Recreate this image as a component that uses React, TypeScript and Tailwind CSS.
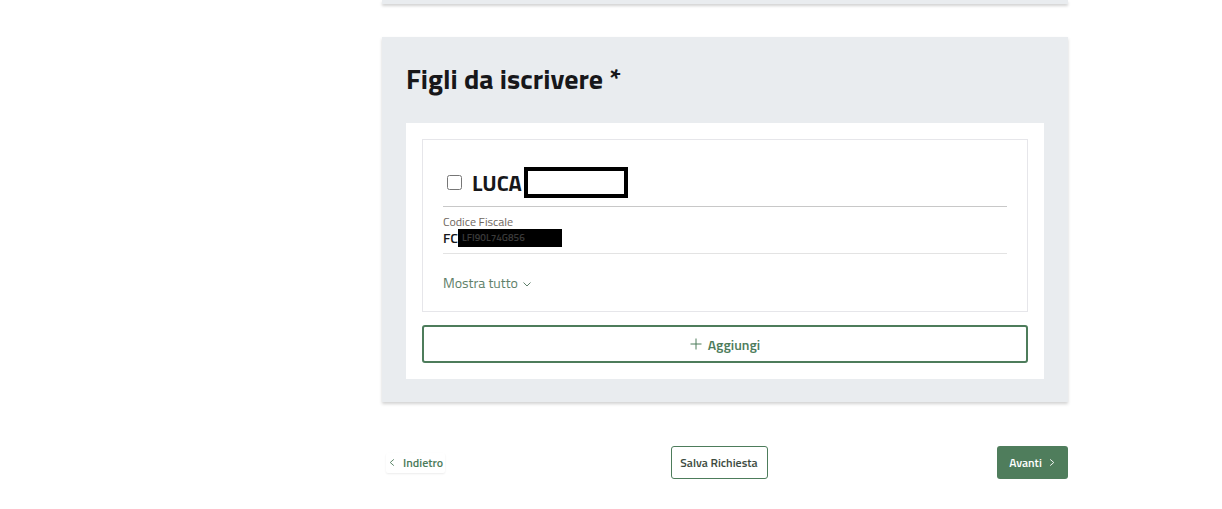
import React from "react";

const font = { fontFamily: '"Titillium Web", "Liberation Sans Narrow", "DejaVu Sans Condensed", "Roboto", sans-serif' };

const Chevron: React.FC<{ dir: "left" | "right" | "down"; className?: string }> = ({ dir, className }) => {
  const d = dir === "left" ? "M6.5 1.5 L2.5 5 L6.5 8.5" : dir === "right" ? "M3.5 1.5 L7.5 5 L3.5 8.5" : "M1.5 3.5 L5 7 L8.5 3.5";
  return (
    <svg viewBox="0 0 10 10" className={className} fill="none" stroke="currentColor" strokeWidth="1">
      <path d={d} />
    </svg>
  );
};

const ChildCard: React.FC = () => (
  <div className="border border-[#e6e6ea] px-5 pt-[27px] pb-[18px]">
    <div className="flex items-center gap-[10px] px-[4px] pb-[8px] border-b border-[#c8c8c8]">
      <input type="checkbox" className="w-[15px] h-[15px] accent-[#4d7c5b]" />
      <div className="flex items-center">
        <span className="text-[22px] font-bold text-[#17171a] leading-none">LUCA</span>
        <span className="inline-block w-[104px] h-[31px] border-[4px] border-black bg-white ml-[2px]" />
      </div>
    </div>
    <div className="pt-[8px] pb-[6px] border-b border-[#e3e3e3]">
      <div className="text-[12px] text-[#6e665e] leading-[13px]">Codice Fiscale</div>
      <div className="mt-[1px] flex items-center text-[14px] font-semibold text-[#17171a] leading-[18px]">
        <span>FC</span>
        <span className="inline-block bg-black text-[#3a3a3a] text-[10px] pl-[4px] h-[18px] leading-[18px] w-[104px]">
          LFI90L74G856
        </span>
      </div>
    </div>
    <div className="flex items-center gap-[4px] pt-[18px] text-[14px] text-[#5f7f6a]">
      Mostra tutto
      <Chevron dir="down" className="w-[10px] h-[10px] mt-[2px]" />
    </div>
  </div>
);

export default function App() {
  return (
    <div className="w-[1222px] h-[509px] bg-white overflow-hidden" style={font}>
      <div className="ml-[382px] w-[686px]">
        <div className="h-[4px] bg-[#e9ecef] shadow-[0_2px_3px_rgba(0,0,0,0.18)]" />
        <div className="mt-[33px] bg-[#e9ecef] shadow-[0_2px_3px_rgba(0,0,0,0.18)] px-[24px] pt-[25px] pb-[23px]">
          <h2 className="text-[28px] font-bold text-[#17171a] leading-[34px]">Figli da iscrivere *</h2>
          <div className="mt-[27px] bg-white p-[16px] flex flex-col gap-[13px]">
            <ChildCard />
            <button className="h-[38px] w-full border-2 border-[#4d7c5b] rounded-[3px] flex items-center justify-center gap-[6px] text-[14px] font-semibold text-[#4d7c5b]">
              <svg viewBox="0 0 12 12" className="w-[12px] h-[12px]" fill="none" stroke="currentColor" strokeWidth="1">
                <path d="M6 0.5 V11.5 M0.5 6 H11.5" />
              </svg>
              Aggiungi
            </button>
          </div>
        </div>
        <div className="mt-[44px] grid grid-cols-[1fr_auto_1fr] items-center">
          <div className="flex">
            <button className="ml-[4px] flex items-center gap-[6px] px-[2px] h-[20px] text-[12px] font-semibold text-[#4d7c5b] shadow-[0_1px_2px_rgba(0,0,0,0.08)] rounded-[2px]">
              <Chevron dir="left" className="w-[9px] h-[9px]" />
              Indietro
            </button>
          </div>
          <button className="mr-[12px] h-[33px] w-[97px] border-[1.5px] border-[#4d7c5b] rounded-[3px] text-[12px] font-semibold text-[#3c4a40]">
            Salva Richiesta
          </button>
          <div className="flex justify-end">
            <button className="h-[33px] w-[71px] bg-[#4f7d5c] rounded-[3px] flex items-center justify-center gap-[5px] text-[12px] font-semibold text-white">
              Avanti
              <Chevron dir="right" className="w-[9px] h-[9px]" />
            </button>
          </div>
        </div>
      </div>
    </div>
  );
}
